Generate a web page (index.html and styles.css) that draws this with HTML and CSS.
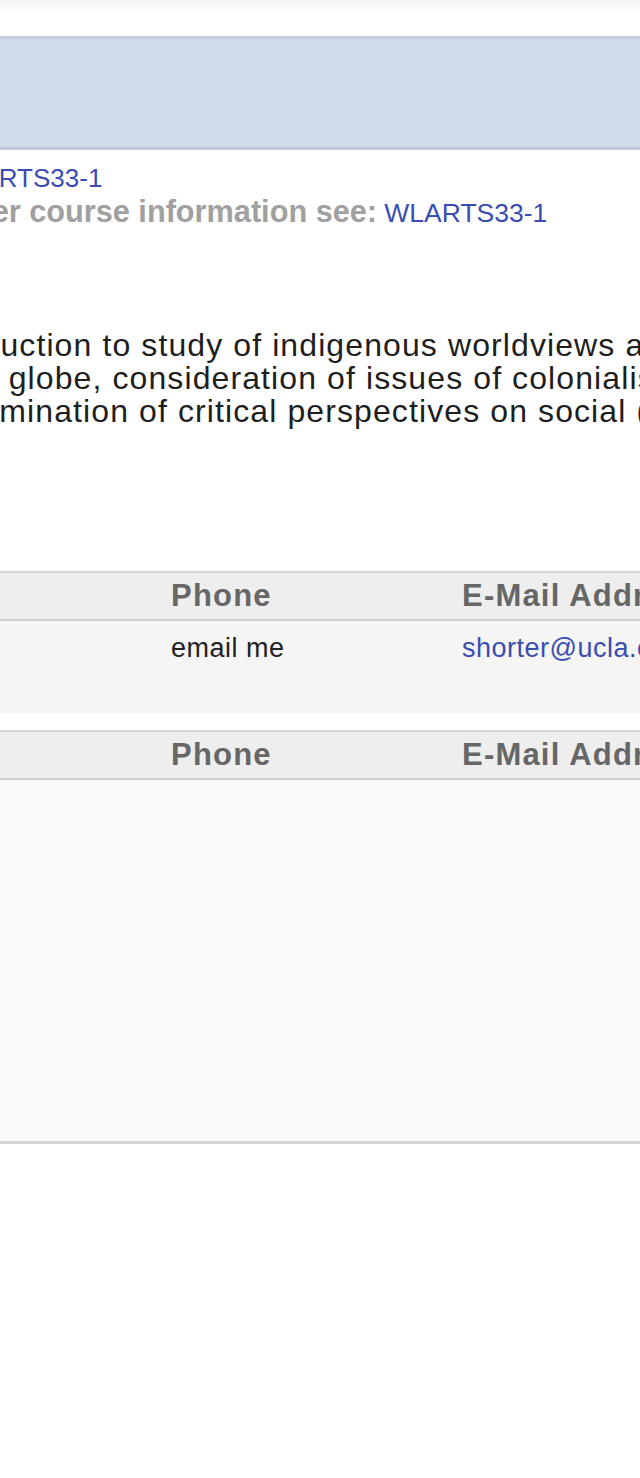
FILE: index.html
```html
<!DOCTYPE html>
<html lang="en">
<head>
  <meta charset="UTF-8" />
  <meta name="viewport" content="width=device-width, initial-scale=1.0" />
  <title>WL ARTS 33 - Course Detail</title>
  <link rel="stylesheet" href="styles.css">
</head>
<body>
  <div class="top-shade"></div>

  <div class="title-bar"></div>

  <div class="course-info">
    <div class="course-id">ID: <a href="#">WLARTS33-1</a></div>
    <div class="course-more"><span class="label">For other course information see:</span> <a href="#">WLARTS33-1</a></div>
  </div>

  <p class="description">
    Introduction to study of indigenous worldviews and cultures from all parts<br>
    of the globe, consideration of issues of colonialism and decolonization,<br>
    &amp; examination of critical perspectives on social (and cultural) change.
  </p>

  <section class="contact-table">
    <div class="row head">
      <div class="cell">Instructor</div>
      <div class="cell">Phone</div>
      <div class="cell">E-Mail Address</div>
    </div>
    <div class="row body">
      <div class="cell">Shorter</div>
      <div class="cell">email me</div>
      <div class="cell"><a href="#">shorter@ucla.edu</a></div>
    </div>
  </section>

  <section class="contact-table tall">
    <div class="row head">
      <div class="cell">TA</div>
      <div class="cell">Phone</div>
      <div class="cell">E-Mail Address</div>
    </div>
    <div class="row body"></div>
  </section>
</body>
</html>
```

FILE: styles.css
```css
body {
  margin: 0;
  overflow: hidden;
  background: #fff;
  font-family: 'Liberation Sans', Arial, sans-serif;
  color: #222;
}
a {
  color: #3a4db2;
  text-decoration: none;
}
.top-shade {
  height: 14px;
  background: linear-gradient(#f3f3f3, #fff);
}
.title-bar {
  margin-top: 22px;
  height: 108px;
  background: #cfdaeb;
  border-top: 3px solid #c3cddd;
  border-bottom: 3px solid #c0c9d8;
}
.course-info {
  margin-left: -98px;
  padding-top: 12px;
  font-size: 26px;
  line-height: 33px;
  white-space: nowrap;
}
.course-more {
  margin-left: -16px;
}
.course-more .label {
  color: #a0a0a0;
  font-size: 30.7px;
  font-weight: bold;
}
.course-more a {
  font-size: 26.5px;
}
.description {
  margin: 99px 0 0 -88px;
  font-size: 32px;
  letter-spacing: 1.1px;
  line-height: 33px;
  white-space: nowrap;
  color: #1e1e1e;
}
.contact-table {
  margin: 143px 0 0 -200px;
  width: 1200px;
}
.contact-table + .contact-table {
  margin-top: 17px;
}
.row {
  display: grid;
  grid-template-columns: 371px 291px 1fr;
  align-items: center;
}
.row.head {
  height: 46px;
  background: #eee;
  border-top: 2px solid #d4d4d4;
  border-bottom: 2px solid #d0d0d0;
  font-size: 31px;
  letter-spacing: 1.2px;
  font-weight: bold;
  color: #666;
}
.row.body {
  height: 92px;
  align-items: start;
  background: #f5f5f5;
  font-size: 27px;
  letter-spacing: 0.5px;
  color: #222;
}
.row.body .cell {
  padding-top: 12px;
}
.tall .row.body {
  height: 361px;
  background: #f9f9f9;
  border-bottom: 3px solid #d4d4d4;
  box-shadow: 0 4px 6px rgba(0, 0, 0, 0.04);
}
```
